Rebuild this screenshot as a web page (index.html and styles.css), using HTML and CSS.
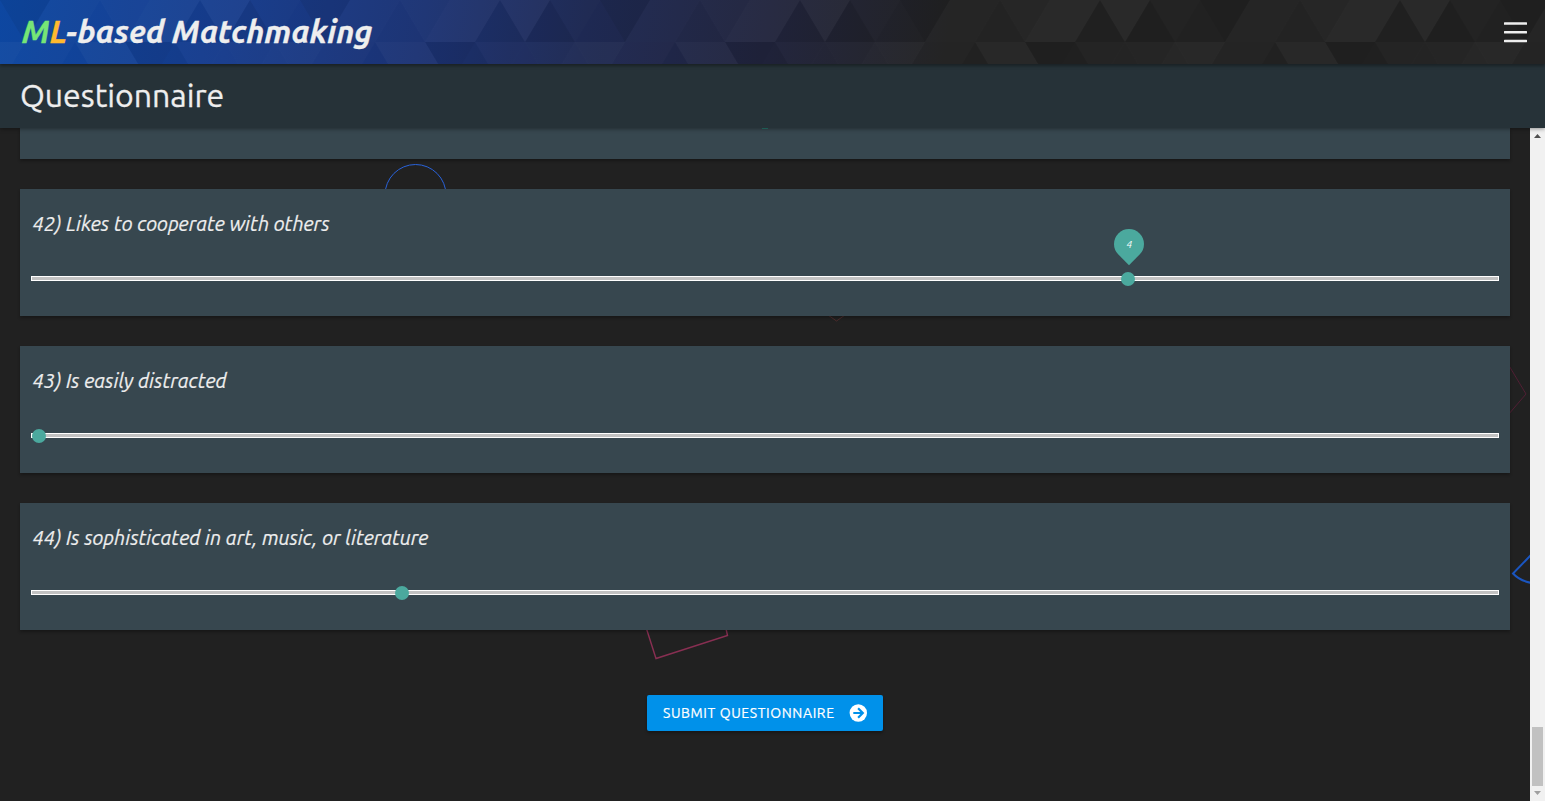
FILE: index.html
```html
<!DOCTYPE html>
<html lang="en">
<head>
<meta charset="utf-8">
<title>ML-based Matchmaking</title>
<link rel="stylesheet" href="styles.css">
</head>
<body>
<header class="topbar">
  <svg class="topbar-pattern" width="100%" height="64" aria-hidden="true">
    <defs>
      <pattern id="triangles" width="300" height="84" patternUnits="userSpaceOnUse">
        <g fill="#fff">
          <path fill-opacity=".02" d="M50 0H100L75 42H25Z"/>
          <path fill-opacity=".022" d="M100 0H150L125 42Z"/>
          <path fill-opacity=".034" d="M150 0H200L175 42H125Z"/>
          <path fill-opacity=".036" d="M200 0H250L225 42Z"/>
          <path fill-opacity=".006" d="M250 0H300L275 42ZM100 0L125 42H75Z"/>
          <path fill-opacity=".014" d="M25 42H75L50 84H0Z"/>
          <path fill-opacity=".033" d="M75 42H125L150 84H100Z"/>
          <path fill-opacity=".014" d="M175 42H225L200 84Z"/>
          <path fill-opacity=".018" d="M225 42H275L250 84Z"/>
          <path fill-opacity=".026" d="M275 42L300 84H250Z"/>
          <path fill-opacity=".033" d="M275 42H300V84ZM0 42H25L0 84Z"/>
          <path fill-opacity=".014" d="M225 42L250 84H200Z"/>
        </g>
        <g fill="#000">
          <path fill-opacity=".06" d="M0 0H50L25 42ZM250 0L275 42H225Z"/>
          <path fill-opacity=".03" d="M200 0L225 42H175ZM175 42L200 84H150Z"/>
          <path fill-opacity=".06" d="M125 42H175L150 84Z"/>
        </g>
      </pattern>
    </defs>
    <rect width="100%" height="64" fill="url(#triangles)"/>
  </svg>
  <h1 class="brand"><span class="brand-m">M</span><span class="brand-l">L</span>-based Matchmaking</h1>
  <svg class="menu-icon" width="23" height="21" viewBox="0 0 23 21" aria-label="Menu"><path d="M.8 1.6H22.200M.8 10.3H22.200M.8 19H22.200" stroke="#eee" stroke-width="2.5" stroke-linecap="round"/></svg>
</header>
<div class="subbar"><h2 class="page-title">Questionnaire</h2></div>
<div class="viewport">
  <main class="content">
    <svg class="shapes" width="1530" height="673" fill="none" aria-hidden="true">
      <circle cx="415.5" cy="67" r="30.5" stroke="#2962d9"/>
      <path d="M828 187L836.500 193L845 187" stroke="#4d2c2c"/>
      <path d="M1508 236L1526 266L1508 287" stroke="#511f34"/>
      <path d="M1532 426L1513 445.500Q1520 453 1532 455" stroke="#1a55c0" stroke-width="2"/>
      <path d="M644 493L656 530.500L727.500 507.500L725 496" stroke="#882f52" stroke-width="1.400"/>
    </svg>
    <section class="card card-clipped"><i class="thumb-edge"></i></section>
    <section class="card">
      <p class="question">42) Likes to cooperate with others</p>
      <div class="range"><span class="thumb" style="left:1089px"><span class="bubble"><b>4</b></span></span></div>
    </section>
    <section class="card">
      <p class="question">43) Is easily distracted</p>
      <div class="range"><span class="thumb" style="left:0px"></span></div>
    </section>
    <section class="card">
      <p class="question">44) Is sophisticated in art, music, or literature</p>
      <div class="range"><span class="thumb" style="left:363px"></span></div>
    </section>
    <button class="submit"><span>SUBMIT QUESTIONNAIRE</span>
      <svg width="18" height="18" viewBox="0 0 18 18"><circle cx="9.300" cy="9" r="8.700" fill="#fff"/><path d="M4.300 9H13.300M9.100 4.300L13.800 9L9.100 13.700" fill="none" stroke="#0091ea" stroke-width="2.200"/></svg>
    </button>
  </main>
  <div class="scrollbar">
    <svg width="15" height="15"><path d="M4 10H11L7.500 6Z" fill="#505050"/></svg>
    <div class="scroll-thumb"></div>
    <svg width="15" height="15"><path d="M4 5H11L7.500 9Z" fill="#a0a0a0"/></svg>
  </div>
</div>
</body>
</html>
```
FILE: styles.css
```css
* { box-sizing: border-box; }
body { margin: 0; height: 801px; overflow: hidden; display: flex; flex-direction: column; background: #212121; color: #eee; font-family: Ubuntu, "Noto Sans", sans-serif; }
h1, h2, p { margin: 0; font-weight: 400; white-space: nowrap; }
.topbar { position: relative; z-index: 3; height: 64px; flex: none; display: flex; align-items: center; justify-content: space-between; padding: 0 18.5px 0 22px; background: linear-gradient(100deg, #0d47a1 0, #173c8c 230px, #1b3273 420px, #1e2953 580px, #20233c 760px, #212121 940px); box-shadow: 0 2px 3px rgba(0,0,0,.35); }
.topbar-pattern { position: absolute; inset: 0; }
.brand { position: relative; font-size: 31.5px; line-height: 64px; font-weight: 700; font-style: italic; letter-spacing: .05px; -webkit-text-stroke: .3px; }
.brand-m { color: #76e576; }
.brand-l { color: #ffb92e; }
.menu-icon { position: relative; }
.subbar { position: relative; z-index: 2; height: 64px; flex: none; padding-left: 20px; background: #263238; box-shadow: 0 1px 4px rgba(0,0,0,.4); }
.page-title { font-size: 32px; line-height: 62px; -webkit-text-stroke: .3px; }
.viewport { flex: 1; min-height: 0; display: flex; }
.content { position: relative; flex: 1; display: flex; flex-direction: column; align-items: stretch; gap: 30px; padding: 0 20px; }
.shapes { position: absolute; left: 0; top: 0; }
.card { position: relative; height: 127px; flex: none; padding: 22px 11px 0; background: #37474f; box-shadow: 0 2px 3px rgba(0,0,0,.3); }
.card-clipped { height: 31px; padding: 0; }
.thumb-edge { display: block; width: 6px; height: 1px; margin-left: 742px; background: #26796f; }
.question { height: 26px; line-height: 26px; margin-left: 1.5px; font-size: 20px; font-style: italic; -webkit-text-stroke: .2px; }
.range { position: relative; height: 5px; margin-top: 39px; border: 1px solid #fff; background: #c2c2c2; }
.thumb { position: absolute; top: -5px; width: 14px; height: 14px; border-radius: 50%; background: #4ba99e; }
.bubble { position: absolute; left: -7px; top: -43px; width: 30px; height: 30px; display: grid; place-items: center; border-radius: 50% 50% 50% 0; background: #4ba99e; transform: rotate(-45deg); }
.bubble b { font-size: 10px; font-weight: 400; font-style: italic; color: #fff; transform: rotate(45deg); }
.submit { position: relative; align-self: center; margin-top: 35px; width: 236px; height: 36px; padding: 0 16px; display: flex; align-items: center; justify-content: space-between; border: 0; border-radius: 2px; background: #0091ea; color: #fff; font: 400 14px Ubuntu, "Noto Sans", sans-serif; letter-spacing: .6px; -webkit-text-stroke: .2px; white-space: nowrap; box-shadow: 0 2px 3px rgba(0,0,0,.3); }
.scrollbar { width: 15px; height: 673px; display: flex; flex-direction: column; background: #f1f1f1; }
.scroll-thumb { width: 11px; height: 59px; margin: auto 2px 0; background: #c1c1c1; }
```
